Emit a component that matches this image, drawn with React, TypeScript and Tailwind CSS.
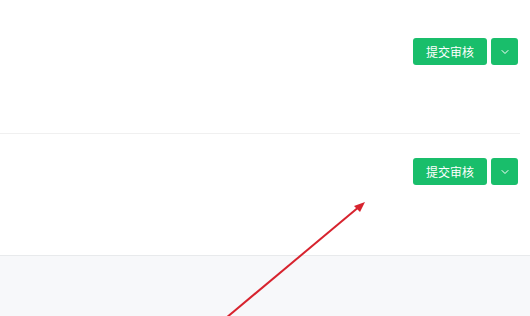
import { ChevronDown } from "lucide-react";

function SubmitGroup() {
  return (
    <div className="flex items-center gap-[4px]">
      <button className="flex h-[27px] w-[74px] items-center justify-center rounded-[3px] bg-[#19be6b] text-[12px] text-white">
        提交审核
      </button>
      <button className="flex h-[27px] w-[27px] items-center justify-center rounded-[3px] bg-[#19be6b] text-white">
        <ChevronDown size={12} strokeWidth={2} />
      </button>
    </div>
  );
}

export default function App() {
  return (
    <div
      className="relative h-[316px] w-[530px] overflow-hidden bg-white"
      style={{ fontFamily: '"Noto Sans CJK SC", "Noto Sans", sans-serif' }}
    >
      <div className="w-[520px]">
        <div className="flex h-[134px] items-start justify-end border-b border-[#f0f0f0] pr-[2px] pt-[38px]">
          <SubmitGroup />
        </div>
        <div className="flex h-[121px] items-start justify-end pr-[2px] pt-[24px]">
          <SubmitGroup />
        </div>
      </div>
      <div className="h-[61px] border-t border-[#e8eaec] bg-[#f7f8fa]" />

      <svg
        className="pointer-events-none absolute left-0 top-0"
        width="530"
        height="316"
        viewBox="0 0 530 316"
      >
        <line
          x1="226"
          y1="318"
          x2="360"
          y2="206"
          stroke="#d7232e"
          strokeWidth="2"
        />
        <polygon points="365,202 354,206 360,212" fill="#d7232e" />
      </svg>
    </div>
  );
}
